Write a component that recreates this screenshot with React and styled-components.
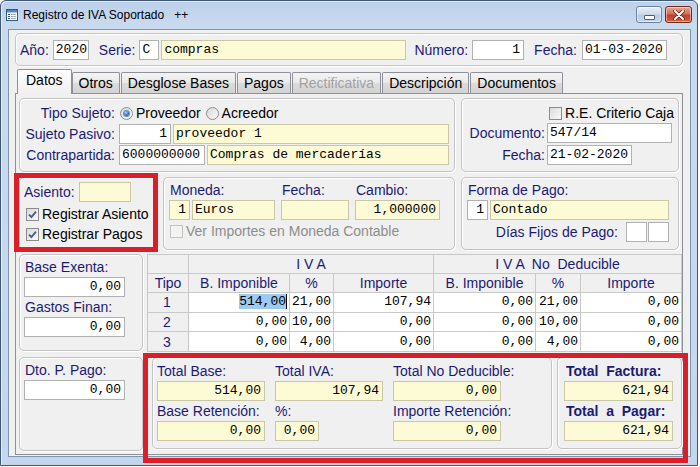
import React from "react";
import styled, { createGlobalStyle } from "styled-components";

const NAVY = "#1b1b74";

const GlobalStyle = createGlobalStyle`
  html, body { margin: 0; padding: 0; background: #ffffff; }
  body { font-family: "Liberation Sans", Arial, sans-serif; font-size: 14px; }
`;

const Window = styled.div`
  box-sizing: border-box;
  width: 698px;
  height: 466px;
  display: flex;
  flex-direction: column;
  padding: 0 6px 8px 7px;
  border: 1px solid #3f5876;
  border-radius: 6px 6px 0 0;
  background: linear-gradient(#bcd0ea 0, #cbdbef 26px, #c4d6ed 100%);
  box-shadow: inset 1px 1px 0 #e4edf8;
`;

const TitleBar = styled.div`
  height: 28px;
  display: flex;
  align-items: center;
  flex: none;
`;

const Title = styled.span`
  margin-left: 5px;
  font-size: 12px;
  color: #000;
  white-space: pre;
`;

const Caption = styled.div`
  margin-left: auto;
  align-self: flex-start;
  margin-top: 5px;
  margin-right: -1px;
  display: flex;
  gap: 3px;
`;

const CaptionButton = styled.div`
  box-sizing: border-box;
  width: ${p => p.$w}px;
  height: 17px;
  border-radius: 3px;
  display: flex;
  align-items: center;
  justify-content: center;
  border: 1px solid ${p => (p.$close ? "#74291d" : "#6c83a1")};
  background: ${p =>
    p.$close
      ? "linear-gradient(#e9a897 0, #d27059 45%, #c2402a 55%, #d4613f 100%)"
      : "linear-gradient(#e7eef7 0, #cfdceb 45%, #b8cbe2 55%, #c9d8ea 100%)"};
  box-shadow: inset 0 0 0 1px rgba(255, 255, 255, 0.45);
`;

const MinDash = styled.span`
  width: 9px;
  height: 3px;
  margin-top: 5px;
  background: #fff;
  border: 1px solid #4c5f78;
  border-radius: 1px;
`;

const Client = styled.div`
  flex: 1;
  display: flex;
  flex-direction: column;
  box-sizing: border-box;
  border: 1px solid #7f94ae;
  background: #f0f0f0;
  padding: 3px 7px 1px 6px;
`;

const HeaderPanel = styled.div`
  box-sizing: border-box;
  height: 33px;
  display: flex;
  align-items: center;
  padding-left: 4px;
  border: 1px solid #c4c4c4;
  border-radius: 5px;
  box-shadow: inset 1px 1px 0 #fff, 1px 1px 0 #fff;
`;

const Label = styled.span`
  color: ${p => (p.$muted ? "#8d8d8d" : p.$plain ? "#000" : NAVY)};
  font-size: 14px;
  font-weight: ${p => (p.$bold ? "bold" : "normal")};
  line-height: ${p => p.$lh || 16}px;
  white-space: pre;
  margin-left: ${p => p.$ml || 0}px;
  margin-right: ${p => p.$mr || 0}px;
  justify-self: ${p => (p.$end ? "end" : "start")};
`;

const Field = styled.div`
  box-sizing: border-box;
  height: 20px;
  width: ${p => (p.$w ? `${p.$w}px` : "auto")};
  flex: ${p => (p.$grow ? "1 1 auto" : "none")};
  justify-self: start;
  border: 1px solid ${p => (p.$yellow ? "#cac7a6" : "#b1b1b1")};
  background: ${p => (p.$yellow ? "#fdfad6" : "#ffffff")};
  font-family: "Liberation Mono", "DejaVu Sans Mono", monospace;
  font-size: 13px;
  line-height: 18px;
  color: #000;
  padding: 0 3px 0 2px;
  text-align: ${p => (p.$right ? "right" : "left")};
  white-space: pre;
  overflow: hidden;
`;

const Pair = styled.div`
  display: flex;
  gap: ${p => p.$gap ?? 2}px;
`;

const TabBar = styled.div`
  height: 23px;
  margin-top: 5px;
  padding-left: 4px;
  display: flex;
  align-items: flex-end;
  gap: 1px;
  position: relative;
  z-index: 1;
  margin-bottom: -1px;
`;

const Tab = styled.div`
  box-sizing: border-box;
  height: ${p => (p.$active ? 25 : 21)}px;
  margin: ${p => (p.$active ? "0 -1px 0 -2px" : "0 0 1px 0")};
  padding: ${p => (p.$active ? "1px 8px 0" : "0 6px")};
  border: 1px solid #8e9199;
  border-bottom: none;
  border-radius: 2px 2px 0 0;
  background: ${p =>
    p.$active
      ? "linear-gradient(#fdfdfd, #f0f0f0)"
      : "linear-gradient(#f4f4f4 0, #e9e9e9 50%, #dcdcdc 51%, #d3d3d3 100%)"};
  color: ${p => (p.$disabled ? "#a2a2a2" : "#000")};
  font-size: 14px;
  line-height: ${p => (p.$active ? 19 : 20)}px;
  white-space: nowrap;
`;

const TabPanel = styled.div`
  flex: 1;
  box-sizing: border-box;
  border: 1px solid #8e9199;
  background: #f0f0f0;
  padding: 4px 0 3px 3px;
  display: flex;
  flex-direction: column;
`;

const Row = styled.div`
  display: flex;
  gap: ${p => p.$gap}px;
  margin-top: ${p => p.$mt || 0}px;
`;

const Panel = styled.div`
  box-sizing: border-box;
  width: ${p => p.$w}px;
  height: ${p => p.$h}px;
  flex: none;
  padding: ${p => p.$pad || "0"};
  border: 1px solid #c4c4c4;
  border-radius: 5px;
  box-shadow: inset 1px 1px 0 #fff, 1px 1px 0 #fff;
  display: flex;
  flex-direction: column;
`;

const FormGrid = styled.div`
  display: grid;
  grid-template-columns: ${p => p.$label}px 1fr;
  column-gap: ${p => p.$cg ?? 4}px;
  row-gap: ${p => p.$rg ?? 1}px;
  grid-auto-rows: 20px;
  align-items: center;
`;

const Line = styled.div`
  display: flex;
  align-items: center;
  height: ${p => p.$h || 20}px;
  margin-top: ${p => p.$mt || 0}px;
  justify-content: ${p => (p.$end ? "flex-end" : "flex-start")};
`;

const Column = styled.div`
  display: flex;
  flex-direction: column;
  gap: 2px;
`;

const Highlight = styled.div`
  position: relative;
  display: flex;
  gap: ${p => p.$gap || 0}px;
  &::after {
    content: "";
    position: absolute;
    pointer-events: none;
    top: ${p => -p.$inset[0]}px;
    right: ${p => -p.$inset[1]}px;
    bottom: ${p => -p.$inset[2]}px;
    left: ${p => -p.$inset[3]}px;
    border: 5px solid #da1f29;
  }
`;

const Radio = styled.span`
  box-sizing: border-box;
  width: 13px;
  height: 13px;
  flex: none;
  border-radius: 50%;
  border: 1px solid #8b8b8b;
  background: linear-gradient(135deg, #d8d8d8, #fbfbfb);
  display: inline-flex;
  align-items: center;
  justify-content: center;
  margin-left: ${p => p.$ml || 0}px;
  &::after {
    content: "";
    width: 5px;
    height: 5px;
    border-radius: 50%;
    background: ${p => (p.$on ? "radial-gradient(circle at 40% 35%, #a9d6ff, #1d5aa6 70%)" : "transparent")};
    box-shadow: ${p => (p.$on ? "0 0 0 1px #5d8fc9" : "none")};
  }
`;

const Box = styled.span`
  box-sizing: border-box;
  width: 13px;
  height: 13px;
  flex: none;
  border: 1px solid ${p => (p.$disabled ? "#c3c3c3" : "#8b8b8b")};
  background: ${p => (p.$disabled ? "#f3f3f3" : "linear-gradient(135deg, #d9d9d9, #fbfbfb)")};
  display: inline-flex;
  align-items: center;
  justify-content: center;
  margin-left: ${p => p.$ml || 0}px;
  margin-right: 3px;
`;

const Check = ({ on, disabled, ml }) => (
  <Box $disabled={disabled} $ml={ml}>
    {on && (
      <svg width="9" height="9" viewBox="0 0 9 9">
        <path d="M1 4.6 L3.4 7 L8 1.6" fill="none" stroke="#4a5e8c" strokeWidth="1.9" />
      </svg>
    )}
  </Box>
);

const Table = styled.table`
  border-collapse: collapse;
  table-layout: fixed;
  width: 535px;
  height: 98px;
  border: 1px solid #a5a5a5;
  background: #f0f0f0;
  flex: none;
`;

const Th = styled.th`
  font-weight: normal;
  color: ${NAVY};
  font-size: 14px;
  padding: 0;
  height: 18px;
  border: 1px solid #c9c9c9;
  text-align: center;
  white-space: pre;
  line-height: 16px;
`;

const Td = styled.td`
  padding: 0 2px 0 0;
  height: 18px;
  border: 1px solid #c9c9c9;
  background: ${p => (p.$tipo ? "#f0f0f0" : "#ffffff")};
  color: ${p => (p.$tipo ? NAVY : "#000")};
  text-align: ${p => (p.$tipo ? "center" : "right")};
  font-family: ${p => (p.$tipo ? `"Liberation Sans", Arial, sans-serif` : `"Liberation Mono", "DejaVu Sans Mono", monospace`)};
  font-size: ${p => (p.$tipo ? 14 : 13)}px;
  white-space: pre;
  line-height: 16px;
`;

const Selected = styled.span`
  background: #9ccaf0;
  border-right: 1px solid #000;
`;

const TotalsGrid = styled.div`
  display: grid;
  grid-template-columns: repeat(3, 108px);
  grid-template-rows: 16px 20px 16px 20px;
  column-gap: 10px;
  row-gap: 2px;
`;

const AppIcon = () => (
  <svg width="12" height="12" viewBox="0 0 12 12" style={{ marginLeft: -2, flex: "none" }}>
    <rect x="0.5" y="0.5" width="11" height="11" fill="#fff" stroke="#34578a" />
    <rect x="1" y="1" width="10" height="2.5" fill="#4f86c8" />
    <path d="M2 5.5h2M2 7.5h2M2 9.5h2" stroke="#34578a" />
    <path d="M5 5.5h5M5 7.5h5M5 9.5h5" stroke="#9fb2cb" />
  </svg>
);

const rows = [
  ["1", "514,00", "21,00", "107,94", "0,00", "21,00", "0,00"],
  ["2", "0,00", "10,00", "0,00", "0,00", "10,00", "0,00"],
  ["3", "0,00", " 4,00", "0,00", "0,00", " 4,00", "0,00"],
];

const tabs = ["Datos", "Otros", "Desglose Bases", "Pagos", "Rectificativa", "Descripción", "Documentos"];

export default function App() {
  return (
    <>
      <GlobalStyle />
      <Window>
        <TitleBar>
          <AppIcon />
          <Title>Registro de IVA Soportado   ++</Title>
          <Caption>
            <CaptionButton $w={26}>
              <MinDash />
            </CaptionButton>
            <CaptionButton $w={27} $close>
              <svg width="12" height="10" viewBox="0 0 12 10">
                <path d="M2 1 L10 9 M10 1 L2 9" stroke="#5a1d12" strokeWidth="3.4" strokeLinecap="round" />
                <path d="M2 1 L10 9 M10 1 L2 9" stroke="#fff" strokeWidth="2" strokeLinecap="round" />
              </svg>
            </CaptionButton>
          </Caption>
        </TitleBar>

        <Client>
          <HeaderPanel>
            <Label $mr={4}>Año:</Label>
            <Field $w={36}>2020</Field>
            <Label $ml={10} $mr={4}>Serie:</Label>
            <Pair>
              <Field $w={20}>C</Field>
              <Field $w={245} $yellow>compras</Field>
            </Pair>
            <Label $ml={8} $mr={4}>Número:</Label>
            <Field $w={52} $right>1</Field>
            <Label $ml={10} $mr={5}>Fecha:</Label>
            <Field $w={85}>01-03-2020</Field>
          </HeaderPanel>

          <TabBar>
            {tabs.map((t, i) => (
              <Tab key={t} $active={i === 0} $disabled={t === "Rectificativa"}>{t}</Tab>
            ))}
          </TabBar>

          <TabPanel>
            <Row $gap={6}>
              <Panel $w={436} $h={74} $pad="4px 5px 0 0">
                <FormGrid $label={95}>
                  <Label $end>Tipo Sujeto:</Label>
                  <Line>
                    <Radio $on $ml={1} />
                    <Label $plain $ml={3}>Proveedor</Label>
                    <Radio $ml={5} />
                    <Label $plain $ml={3}>Acreedor</Label>
                  </Line>
                  <Label $end>Sujeto Pasivo:</Label>
                  <Pair>
                    <Field $w={52} $right>1</Field>
                    <Field $grow $yellow>proveedor 1</Field>
                  </Pair>
                  <Label $end>Contrapartida:</Label>
                  <Pair>
                    <Field $w={86}>6000000000</Field>
                    <Field $grow $yellow>Compras de mercaderías</Field>
                  </Pair>
                </FormGrid>
              </Panel>
              <Panel $w={218} $h={74} $pad="4px 4px 0 0">
                <Line $end>
                  <Check />
                  <Label $plain>R.E. Criterio Caja</Label>
                </Line>
                <FormGrid $label={83} $cg={2} $rg={2}>
                  <Label $end>Documento:</Label>
                  <Field $w={125}>547/14</Field>
                  <Label $end>Fecha:</Label>
                  <Field $w={85}>21-02-2020</Field>
                </FormGrid>
              </Panel>
            </Row>

            <Row $gap={6} $mt={5}>
              <Highlight $inset={[4, 1, 2, 5]}>
                <Panel $w={138} $h={73} $pad="4px 0 0 4px">
                  <Line>
                    <Label $mr={4}>Asiento:</Label>
                    <Field $w={52} $yellow />
                  </Line>
                  <Line $mt={2}>
                    <Check on ml={2} />
                    <Label $plain>Registrar Asiento</Label>
                  </Line>
                  <Line>
                    <Check on ml={2} />
                    <Label $plain>Registrar Pagos</Label>
                  </Line>
                </Panel>
              </Highlight>
              <Panel $w={292} $h={73} $pad="4px 0 0 5px">
                <Pair $gap={6}>
                  <Column>
                    <Label $ml={1}>Moneda:</Label>
                    <Pair>
                      <Field $w={21} $yellow $right>1</Field>
                      <Field $w={83} $yellow>Euros</Field>
                    </Pair>
                  </Column>
                  <Column>
                    <Label $ml={1}>Fecha:</Label>
                    <Field $w={68} $yellow />
                  </Column>
                  <Column>
                    <Label $ml={1}>Cambio:</Label>
                    <Field $w={85} $yellow $right>1,000000</Field>
                  </Column>
                </Pair>
                <Line $mt={1}>
                  <Check disabled ml={1} />
                  <Label $muted>Ver Importes en Moneda Contable</Label>
                </Line>
              </Panel>
              <Panel $w={218} $h={73} $pad="4px 9px 0 5px">
                <Column>
                  <Label $ml={1}>Forma de Pago:</Label>
                  <Pair>
                    <Field $w={21} $right>1</Field>
                    <Field $grow $yellow>Contado</Field>
                  </Pair>
                </Column>
                <Line $end $mt={2}>
                  <Label $mr={8}>Días Fijos de Pago:</Label>
                  <Pair $gap={1}>
                    <Field $w={21} />
                    <Field $w={21} />
                  </Pair>
                </Line>
              </Panel>
            </Row>

            <Row $gap={4} $mt={4}>
              <Panel $w={124} $h={97} $pad="4px 0 0 4px">
                <Column>
                  <Label $ml={1}>Base Exenta:</Label>
                  <Field $w={101} $right>0,00</Field>
                  <Label $ml={1}>Gastos Finan:</Label>
                  <Field $w={101} $right>0,00</Field>
                </Column>
              </Panel>
              <Table>
                <colgroup>
                  <col style={{ width: 41 }} />
                  <col style={{ width: 101 }} />
                  <col style={{ width: 44 }} />
                  <col style={{ width: 100 }} />
                  <col style={{ width: 102 }} />
                  <col style={{ width: 45 }} />
                  <col style={{ width: 101 }} />
                </colgroup>
                <thead>
                  <tr>
                    <Th />
                    <Th colSpan={3}>I V A</Th>
                    <Th colSpan={3}>I V A  No  Deducible</Th>
                  </tr>
                  <tr>
                    <Th>Tipo</Th>
                    <Th>B. Imponible</Th>
                    <Th>%</Th>
                    <Th>Importe</Th>
                    <Th>B. Imponible</Th>
                    <Th>%</Th>
                    <Th>Importe</Th>
                  </tr>
                </thead>
                <tbody>
                  {rows.map((r, i) => (
                    <tr key={i}>
                      {r.map((c, j) => (
                        <Td key={j} $tipo={j === 0}>
                          {i === 0 && j === 1 ? <Selected>{c}</Selected> : c}
                        </Td>
                      ))}
                    </tr>
                  ))}
                </tbody>
              </Table>
            </Row>

            <Row $gap={9} $mt={5}>
              <Panel $w={124} $h={94} $pad="4px 0 0 4px">
                <Column>
                  <Label $ml={1}>Dto. P. Pago:</Label>
                  <Field $w={101} $right>0,00</Field>
                </Column>
              </Panel>
              <Highlight $gap={5} $inset={[4, 6, 12, 9]}>
                <Panel $w={400} $h={92} $pad="5px 0 0 4px">
                  <TotalsGrid>
                    <Label>Total Base:</Label>
                    <Label>Total IVA:</Label>
                    <Label>Total No Deducible:</Label>
                    <Field $w={108} $yellow $right>514,00</Field>
                    <Field $w={108} $yellow $right>107,94</Field>
                    <Field $w={108} $yellow $right>0,00</Field>
                    <Label>Base Retención:</Label>
                    <Label>%:</Label>
                    <Label>Importe Retención:</Label>
                    <Field $w={108} $yellow $right>0,00</Field>
                    <Field $w={44} $yellow $right>0,00</Field>
                    <Field $w={108} $yellow $right>0,00</Field>
                  </TotalsGrid>
                </Panel>
                <Panel $w={125} $h={92} $pad="5px 0 0 6px">
                  <Column>
                    <Label $bold $ml={2}>Total  Factura:</Label>
                    <Field $w={109} $yellow $right>621,94</Field>
                    <Label $bold $ml={2}>Total  a  Pagar:</Label>
                    <Field $w={109} $yellow $right>621,94</Field>
                  </Column>
                </Panel>
              </Highlight>
            </Row>
          </TabPanel>
        </Client>
      </Window>
    </>
  );
}
